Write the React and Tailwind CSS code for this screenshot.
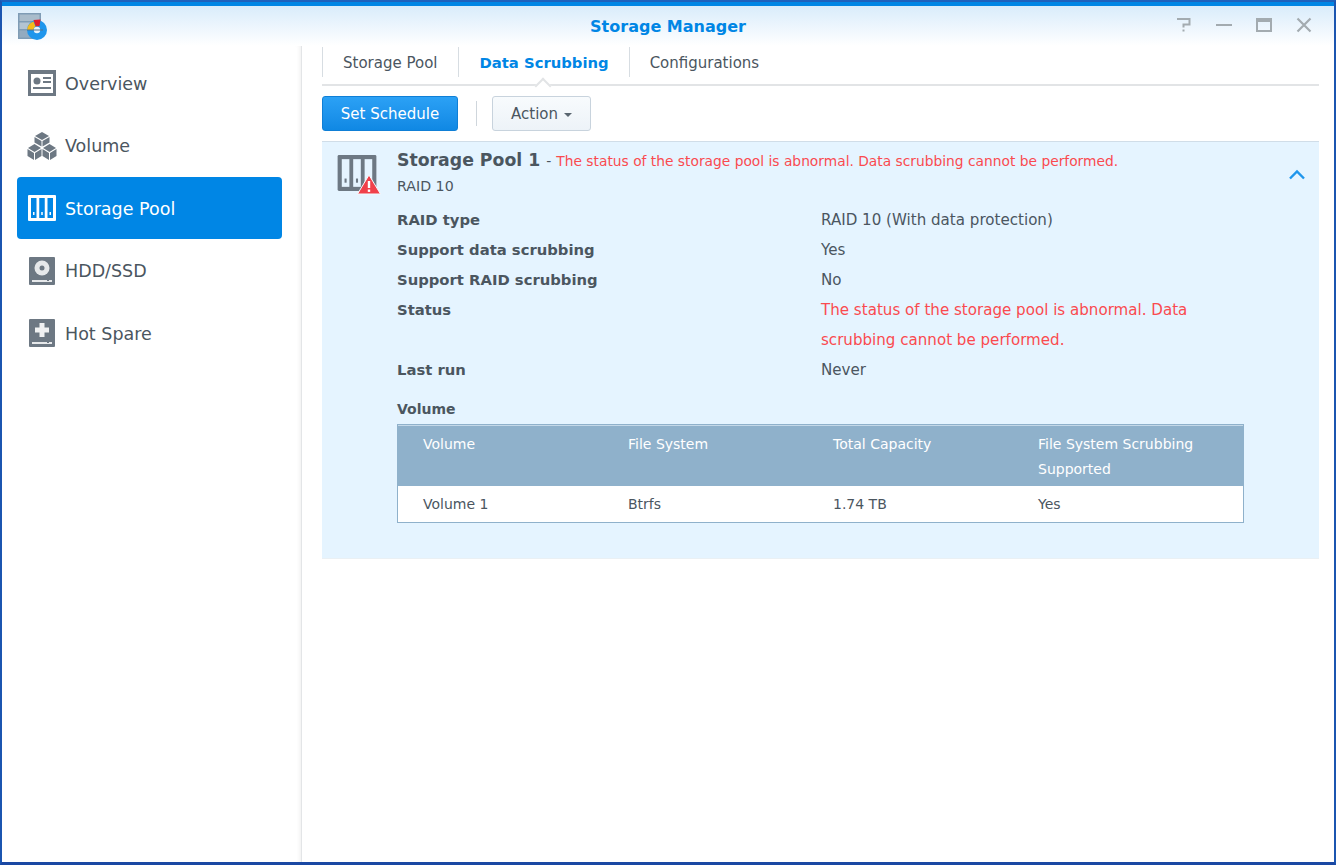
import { useState } from 'react'

function AppLogo() {
  return (
    <svg width="30" height="28" viewBox="0 0 30 28">
      <rect x="0" y="0" width="23" height="26" fill="#7f9cb5" />
      <rect x="1.500" y="1.500" width="20" height="6.500" fill="#a9bccb" />
      <rect x="1.500" y="9.500" width="20" height="6.500" fill="#b3c4d2" />
      <rect x="1.500" y="17.500" width="20" height="7" fill="#93abc0" />
      <circle cx="19" cy="17" r="10" fill="#1f96ec" />
      <path d="M9 17 A10 10 0 0 1 15.500 8.500 L17.500 13.500 A3.500 3.500 0 0 0 15.500 17 Z" fill="#f6b91a" />
      <path d="M15.500 7 L22.500 6.500 L21.500 13 L17.800 13.500 Z" fill="#e11d2a" />
      <circle cx="19" cy="17" r="3.200" fill="#e8f3fb" />
      <rect x="9" y="16.500" width="16" height="1" fill="#55708a" />
    </svg>
  )
}

function OverviewIcon() {
  return (
    <svg width="28" height="26" viewBox="0 0 28 26">
      <path fillRule="evenodd" d="M0 0H28V26H0Z M3 4V23H25V4Z" fill="#6d7883" />
      <circle cx="9" cy="11" r="3.500" fill="#6d7883" />
      <rect x="15" y="7" width="8" height="2" fill="#6d7883" />
      <rect x="15" y="11" width="8" height="2" fill="#6d7883" />
      <rect x="5" y="17" width="18" height="2" fill="#6d7883" />
    </svg>
  )
}

function VolumeIcon() {
  return (
    <svg width="30" height="30" viewBox="0 0 30 30" fill="#6d7883">
      <path d="M15 1L22 5L15 9L8 5Z" />
      <path d="M7.500 6L14.500 10V15.500L7.500 11.500Z" />
      <path d="M22.500 6L15.500 10V15.500L22.500 11.500Z" />
      <path d="M7.500 13L14 17L7.500 21L1 17Z" />
      <path d="M0.500 18L7 22V29L0.500 25Z" />
      <path d="M14.500 18L8 22V29L14.500 25Z" />
      <path d="M22.500 13L29 17L22.500 21L16 17Z" />
      <path d="M15.500 18L22 22V29L15.500 25Z" />
      <path d="M29.500 18L23 22V29L29.500 25Z" />
    </svg>
  )
}

function PoolIcon({ color, back, w = 28, h = 26 }) {
  return (
    <svg width={w} height={h} viewBox="0 0 28 26">
      <rect width="28" height="26" rx="1" fill={color} />
      <rect x="3" y="3" width="5.500" height="20" fill={back} />
      <rect x="11.250" y="3" width="5.500" height="20" fill={back} />
      <rect x="19.500" y="3" width="5.500" height="20" fill={back} />
      <rect x="5" y="17" width="1.500" height="3" fill={color} />
      <rect x="13.250" y="17" width="1.500" height="3" fill={color} />
      <rect x="21.500" y="17" width="1.500" height="3" fill={color} />
    </svg>
  )
}

function HddIcon() {
  return (
    <svg width="26" height="28" viewBox="0 0 26 28">
      <rect width="26" height="28" rx="1" fill="#6d7883" />
      <circle cx="13" cy="11" r="7.500" fill="#e6e8ea" />
      <circle cx="13" cy="11" r="2.500" fill="#6d7883" />
      <rect x="3" y="23" width="20" height="2" fill="#e6e8ea" />
      <rect x="18" y="23" width="2" height="1" fill="#6d7883" />
    </svg>
  )
}

function SpareIcon() {
  return (
    <svg width="26" height="28" viewBox="0 0 26 28">
      <rect width="26" height="28" rx="1" fill="#6d7883" />
      <path d="M10.500 4H15.500V8.500H20V13.500H15.500V18H10.500V13.500H6V8.500H10.500Z" fill="#f0f1f2" />
      <rect x="3" y="23" width="20" height="2" fill="#e6e8ea" />
      <rect x="18" y="23" width="2" height="1" fill="#6d7883" />
    </svg>
  )
}

function WarnPoolIcon() {
  return (
    <div className="relative w-[44px] h-[40px] shrink-0">
      <PoolIcon color="#6d7883" back="#e5f4ff" w={40} h={36} />
      <svg className="absolute right-0 bottom-0" width="24" height="21" viewBox="0 0 24 21">
        <path d="M12 1L23.500 20H0.500Z" fill="#f0404a" stroke="#f6fafd" strokeWidth="1" strokeLinejoin="round" />
        <rect x="10.800" y="7" width="2.400" height="7" fill="#fff" />
        <rect x="10.800" y="15.500" width="2.400" height="2.400" fill="#fff" />
      </svg>
    </div>
  )
}

const navItems = [
  { label: 'Overview', icon: <OverviewIcon /> },
  { label: 'Volume', icon: <VolumeIcon /> },
  { label: 'Storage Pool', icon: <PoolIcon color="#fff" back="#0086e5" />, active: true },
  { label: 'HDD/SSD', icon: <HddIcon /> },
  { label: 'Hot Spare', icon: <SpareIcon /> },
]

const details = [
  ['RAID type', 'RAID 10 (With data protection)'],
  ['Support data scrubbing', 'Yes'],
  ['Support RAID scrubbing', 'No'],
  ['Status', 'The status of the storage pool is abnormal. Data scrubbing cannot be performed.', true],
  ['Last run', 'Never'],
]

export default function App() {
  const [tab, setTab] = useState('Data Scrubbing')
  const tabs = ['Storage Pool', 'Data Scrubbing', 'Configurations']

  return (
    <div className="w-[1336px] h-[865px] overflow-hidden flex flex-col bg-white border-x-2 border-b-[3px] border-t-2 border-x-[#1b55b0] border-b-[#1a48a3] border-t-[#1e62bd] font-['DejaVu_Sans',sans-serif] text-[#4b565f]">
      {/* title bar */}
      <header className="relative shrink-0 h-[44px] border-t-4 border-[#0086e5] bg-gradient-to-b from-[#d9ecfb] to-white flex items-center justify-center">
        <div className="absolute left-[16px] top-[7px]"><AppLogo /></div>
        <h1 className="text-[16px] font-bold text-[#0086e5] mt-[1px]">Storage Manager</h1>
        <div className="absolute right-[22px] top-[11px] flex items-center gap-[24px] text-[#a3abb0]">
          <svg width="16" height="16" viewBox="0 0 16 16" fill="none" stroke="currentColor" strokeWidth="2">
            <path d="M1 2H13.500V7.500H7.500V10.500" />
            <rect x="6.500" y="12.500" width="2" height="2" fill="currentColor" stroke="none" />
          </svg>
          <svg width="16" height="16" viewBox="0 0 16 16"><rect y="7" width="16" height="2" fill="currentColor" /></svg>
          <svg width="16" height="14" viewBox="0 0 16 14" fill="none" stroke="currentColor">
            <path d="M0 0H16V4H0Z" fill="currentColor" stroke="none" />
            <rect x="1" y="1" width="14" height="12" strokeWidth="2" />
          </svg>
          <svg width="16" height="16" viewBox="0 0 16 16" stroke="currentColor" strokeWidth="2.200">
            <path d="M1.500 1.500L14.500 14.500M14.500 1.500L1.500 14.500" />
          </svg>
        </div>
      </header>

      <div className="flex flex-1 min-h-0">
        {/* sidebar */}
        <aside className="w-[300px] shrink-0 pl-[15px] pr-[19px] pt-[6px] bg-white border-r border-[#e3e5e7] shadow-[inset_-4px_0_4px_-3px_#eeeeee]">
          {navItems.map(item => (
            <div
              key={item.label}
              className={`h-[62px] mb-[0.5px] flex items-center rounded-[4px] pl-[10px] text-[17.500px] ${item.active ? 'bg-[#0086e5] text-white' : 'text-[#4b565f]'}`}
            >
              <span className="w-[30px] flex justify-center shrink-0">{item.icon}</span>
              <span className="ml-[8px] pt-[2px]">{item.label}</span>
            </div>
          ))}
        </aside>

        {/* main content */}
        <main className="flex-1 pl-[20px] pr-[15px] min-w-0">
          <nav className="relative h-[40px] flex border-b-2 border-[#e2e4e6]">
            {tabs.map(t => (
              <button
                key={t}
                onClick={() => setTab(t)}
                className={`h-[30px] mt-[1px] pt-[3px] border-l border-[#d7dde2] last:border-r ${tab === t ? 'pl-[21px] pr-[20px] font-bold text-[#0086e5] text-[14.800px]' : 'px-[20px] text-[#4b565f] text-[15px]'}`}
              >
                {t}
              </button>
            ))}
            <span className="absolute left-[215px] bottom-[-2px] w-[12px] h-[12px] rotate-45 translate-y-[6px] bg-white border-l-2 border-t-2 border-[#e2e4e6]" />
          </nav>

          <div className="h-[55px] flex items-center">
            <button className="w-[136px] h-[35px] pt-[2px] rounded-[3px] bg-gradient-to-b from-[#2ba1f5] to-[#0f88e4] border border-[#0f7fd6] text-white text-[15px]">
              Set Schedule
            </button>
            <span className="w-px h-[25px] bg-[#cfd6dc] ml-[18px] mr-[15px]" />
            <button className="w-[99px] h-[35px] pt-[2px] rounded-[3px] bg-gradient-to-b from-[#f8fbfd] to-[#edf3f8] border border-[#c8d3dd] text-[15px] flex items-center justify-center gap-[6px]">
              Action
              <span className="w-0 h-0 border-x-[4px] border-x-transparent border-t-[4px] border-t-[#5a6670] mt-[1px]" />
            </button>
          </div>

          <section className="h-[418px] bg-[#e5f4ff] border-t border-[#d0dde8] border-b-[#eaf0f4] border-b pl-[15px] pt-[13px] pr-[16px] relative">
            <div className="flex">
              <WarnPoolIcon />
              <div className="pl-[16px] flex-1 -mt-[4px]">
                <div className="h-[20px] flex items-center whitespace-nowrap">
                  <span className="text-[17.300px] font-bold">Storage Pool 1</span>
                  <span className="text-[14px] ml-[6px]">-</span>
                  <span className="text-[13.800px] text-[#fa4a4f] ml-[5px]">The status of the storage pool is abnormal. Data scrubbing cannot be performed.</span>
                </div>
                <div className="text-[14.200px] mt-[5px] leading-[20px]">RAID 10</div>
              </div>
            </div>
            <svg className="absolute right-[13px] top-[27px]" width="18" height="11" viewBox="0 0 18 11" fill="none" stroke="#1f96ec" strokeWidth="2.400">
              <path d="M2 9.500L9 2.500L16 9.500" />
            </svg>

            <div className="ml-[60px] mt-[9px]">
              {details.map(([label, value, isError]) => (
                <div key={label} className="flex leading-[30px]">
                  <div className="w-[424px] shrink-0 font-bold text-[14.800px]">{label}</div>
                  <div className={`w-[400px] text-[15.100px] ${isError ? 'text-[#fa4a4f]' : ''}`}>{value}</div>
                </div>
              ))}
              <div className="font-bold text-[14px] mt-[14px] leading-[20px]">Volume</div>
              <div className="mt-[5px] w-[847px] border border-[#8fb1cb]">
                <table className="w-full table-fixed border-collapse text-[14px]">
                  <thead>
                    <tr className="bg-[#8fb1cb] text-white border-t border-t-[#c4d8e8]">
                      {['Volume', 'File System', 'Total Capacity', 'File System Scrubbing Supported'].map((h, i) => (
                        <th key={h} className={`${i < 3 ? 'w-[205px]' : ''} h-[60px] font-normal text-left align-top pl-[25px] pr-[30px] pt-[6px] leading-[25px]`}>{h}</th>
                      ))}
                    </tr>
                  </thead>
                  <tbody>
                    <tr className="bg-white h-[36px]">
                      {['Volume 1', 'Btrfs', '1.74 TB', 'Yes'].map(c => (
                        <td key={c} className="pl-[25px] pt-[2px]">{c}</td>
                      ))}
                    </tr>
                  </tbody>
                </table>
              </div>
            </div>
          </section>
        </main>
      </div>
    </div>
  )
}
